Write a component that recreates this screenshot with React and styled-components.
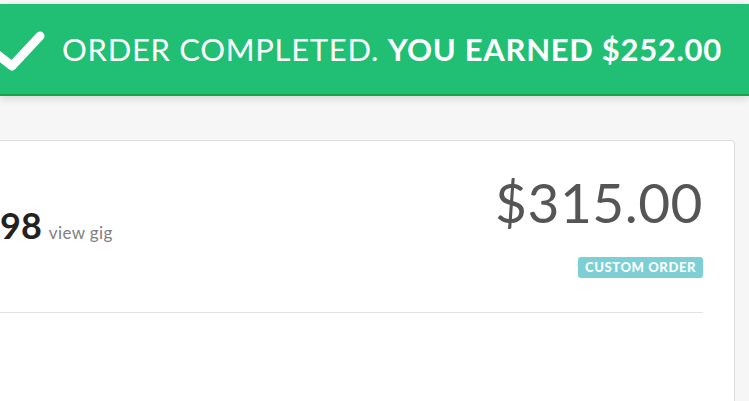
import React from "react";
import styled, { createGlobalStyle } from "styled-components";

const GlobalStyle = createGlobalStyle`
  html, body {
    margin: 0;
    padding: 0;
    background: #f6f6f6;
    font-family: Lato, "Open Sans", Arial, sans-serif;
    overflow: hidden;
  }
`;

const Page = styled.div`
  padding-top: 4px;
  height: 397px;
  overflow: hidden;
`;

const Banner = styled.div`
  height: 90px;
  background: #21bf73;
  border-bottom: 2px solid #16a34a;
  box-shadow: 0 3px 8px rgba(0, 0, 0, 0.12);
  display: flex;
  align-items: center;
  gap: 16px;
`;

const Check = styled.svg`
  width: 46px;
  height: 44px;
  margin-top: 2px;
  flex-shrink: 0;
`;

const Message = styled.div`
  color: #fff;
  font-size: 31px;
  text-transform: uppercase;
  white-space: nowrap;
  letter-spacing: 0.7px;

  b {
    font-weight: 700;
  }
`;

const Card = styled.div`
  margin: 44px 14px 0 -20px;
  background: #fff;
  border: 1px solid #dcdcdc;
  border-radius: 4px;
  height: 320px;
  padding: 0 31px 0 19px;
`;

const Header = styled.div`
  display: flex;
  justify-content: space-between;
  align-items: flex-start;
  height: 171px;
  border-bottom: 1px solid #e2e2e2;
`;

const Title = styled.div`
  display: flex;
  align-items: baseline;
  gap: 7px;
  margin-top: 62px;
`;

const OrderNo = styled.span`
  font-size: 36px;
  font-weight: 700;
  color: #222;
`;

const ViewGig = styled.span`
  font-size: 17px;
  color: #808080;
  letter-spacing: 0.4px;
`;

const PriceCol = styled.div`
  display: flex;
  flex-direction: column;
  align-items: flex-end;
  padding-top: 34px;
`;

const Price = styled.div`
  font-size: 55px;
  color: #555;
  line-height: 1;
  letter-spacing: 0.5px;
`;

const Badge = styled.span`
  margin-top: 27px;
  background: #7bcfd5;
  color: #fff;
  font-size: 13px;
  font-weight: 900;
  text-transform: uppercase;
  line-height: 21px;
  padding: 0 7px;
  border-radius: 3px;
  letter-spacing: 0.6px;
`;

export default function App() {
  return (
    <Page>
      <GlobalStyle />
      <Banner>
        <Check viewBox="0 0 46 44">
          <polyline
            points="-6,24 12,38 40,8"
            fill="none"
            stroke="#fff"
            strokeWidth="9"
            strokeLinecap="round"
            strokeLinejoin="round"
          />
        </Check>
        <Message>
          Order completed. <b>You earned $252.00</b>
        </Message>
      </Banner>
      <Card>
        <Header>
          <Title>
            <OrderNo>98</OrderNo>
            <ViewGig>view gig</ViewGig>
          </Title>
          <PriceCol>
            <Price>$315.00</Price>
            <Badge>Custom order</Badge>
          </PriceCol>
        </Header>
      </Card>
    </Page>
  );
}
